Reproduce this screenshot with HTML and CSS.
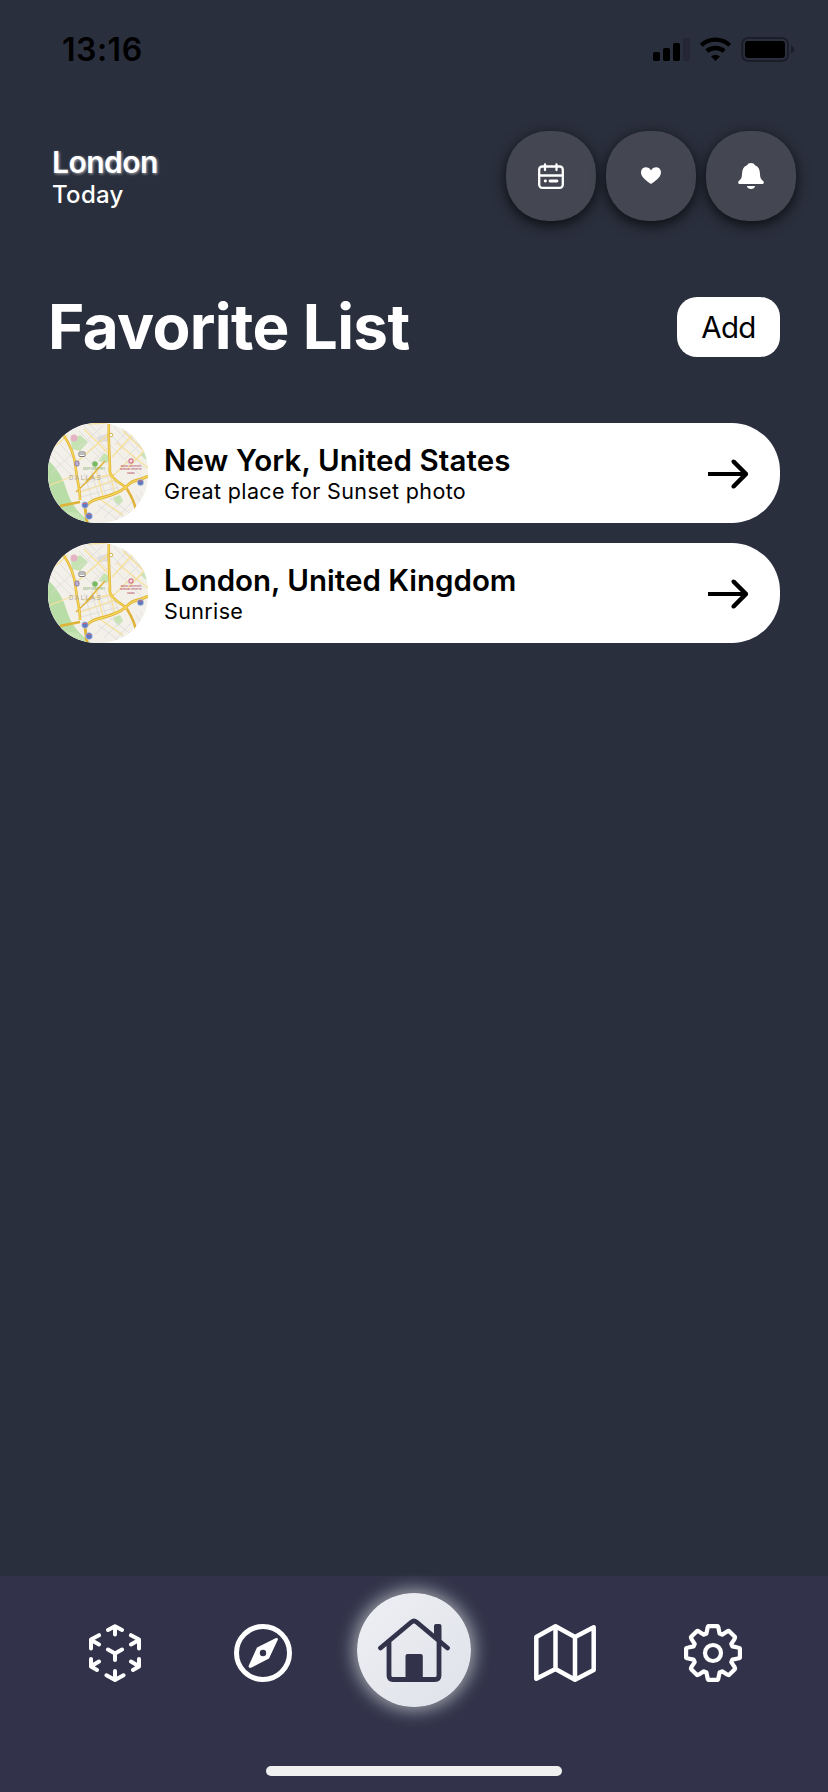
FILE: index.html
```
<!DOCTYPE html>
<html lang="en">
<head>
<meta charset="utf-8">
<title>Favorite List</title>
<link rel="stylesheet" href="styles.css">
</head>
<body>
<svg class="defs" aria-hidden="true">
  <symbol id="map-tile" viewBox="0 0 100 100">
    <rect width="100" height="100" fill="#f3f0ea"/>
    <path d="M0 37Q14 50 19 68T43 100H22L0 75Z" fill="#b9dda6"/>
    <path d="M23 17l9-5 8 7-8 9-8-2zM56 30l7 4-4 6-9-2zM92 32l8-6v12zM65 75l7-3 3 6-5 5zM18 88l12 2 10 10H24z" fill="#c6e3b3"/>
    <circle cx="26" cy="15" r="3.5" fill="#e5b3c4"/>
    <path d="M49 14l9-3 4 7-12 1z" fill="#dedcdc"/>
    <g fill="none" stroke="#dddbd9" stroke-width=".8">
      <path d="M31 8l24 24M36 3l25 25M41 1l18 18M34 31l16 16M42 25l17 17M66 4l30 30M70 1l30 30M64 13l33 33M62 22l34 34M31 24L55 3M36 33L60 12M43 40L62 23M66 22L84 3M71 28L94 5M77 36L99 14M82 43l18-18M30 62l36-10M31 68l39-10M33 74l38-10M36 50l9 29M43 48l9 28M50 47l8 26M57 47l8 23M64 51l6 16M50 82l20 15M55 78l22 17M62 75l22 17M47 91l20-18M56 95l18-18M67 97l17-18M2 31l22 22M5 26l22 22M11 20l15 16M3 50l23-21M88 72l11 15M92 68l8 12"/>
    </g>
    <g fill="none" stroke="#f6e09a" stroke-width="1.300">
      <path d="M30 38L56 15L62 9M36 6l26 26M64 34L86 10L98 2M69 20l31 25M75 8l24 23M79 46L98 26M35 57l33-6M33 69l36-13M47 43l9 34M60 45l7 25M2 62l26-10M50 75l25 17M62 0L40 1M0 29l20-17M68 50L80 38"/>
    </g>
    <g fill="none" stroke="#dfb238" stroke-linejoin="round">
      <path d="M14 10C23 22 27 33 28 47C29 58 32 64 32 77M12 83L32 79" stroke-width="2.6"/>
      <path d="M61 0C60 18 62 35 62 49C64 58 76 61 79 66S87 79 88 88" stroke-width="2.6"/>
      <path d="M37 84C43 76 51 76 60 73S74 68 80 62S91 58 100 53M37 84l2 16" stroke-width="3"/>
      <path d="M38 59L57 38M28 69L45 53" stroke-width="1.500"/>
    </g>
    <path d="M14 10C23 22 27 33 28 47C29 58 32 64 32 77M61 0C60 18 62 35 62 49C64 58 76 61 79 66M37 84C43 76 51 76 60 73S74 68 80 62S91 58 100 53" fill="none" stroke="#f6d85a" stroke-width="1.200"/>
    <circle cx="47" cy="41" r="2.8" fill="#78b964"/>
    <circle cx="83" cy="38" r="2.7" fill="#d4778b"/><path d="M83 36.500v3M81.500 38h3" stroke="#fff"/>
    <rect x="31" y="29" width="6" height="4.500" rx="1" fill="#fff" stroke="#777"/>
    <path d="M32 31h4" stroke="#777"/>
    <rect x="27" y="38" width="4" height="5" rx="1.500" fill="#b9adca" stroke="#8c7baa"/>
    <circle cx="63" cy="12" r="1.800" fill="#fff" stroke="#d5b44e"/>
    <g fill="#607ac1" stroke="#dce2ef" stroke-width=".6"><circle cx="37" cy="82" r="3.3"/><circle cx="41" cy="93" r="3.5"/><circle cx="92.500" cy="59.500" r="3.200"/></g>
    <path d="M35 80.500h4M39 91.500h4M90.500 58h4" stroke="#c86673"/>
  </symbol>
  <symbol id="arrow" viewBox="0 0 40 30">
    <path d="M0 15H37M25.500 2.500L38 15L25.500 27.500" fill="none" stroke="#000" stroke-width="4" stroke-linejoin="round"/>
    <path d="M25.500 2.500L38 15L25.500 27.500" fill="none" stroke="#000" stroke-width="4" stroke-linejoin="round" stroke-linecap="round"/>
  </symbol>
</svg>

<div class="screen">
  <div class="status">
    <span class="time">13:16</span>
    <svg class="signals" viewBox="0 0 142 26" width="142" height="26">
      <rect x="0" y="15" width="7" height="9" rx="1.700"/><rect x="10" y="11" width="7" height="13" rx="1.700"/><rect x="20" y="6" width="7" height="18" rx="1.700"/><rect x="30" y="1" width="7" height="23" rx="1.700" fill="#242635"/>
      <g fill="none" stroke="#000" stroke-width="4.300"><path d="M48.300 8.300Q54.300 2.700 62.500 2.700T76.700 8.300"/><path d="M53.800 14.200Q57.500 11 62.500 11T71.200 14.200"/></g>
      <path d="M58 19.500Q62.500 16 67 19.500L62.500 24Z"/>
      <rect x="89.200" y="1" width="45.800" height="23" rx="6" fill="none" stroke="#1b1e29" stroke-width="2"/>
      <rect x="92" y="4" width="40" height="17" rx="3"/><path d="M138 8.500q3 1 3 4t-3 4z" fill="#1b1e29"/>
    </svg>
  </div>

  <header class="header">
    <div class="place"><div class="city">London</div><div class="day">Today</div></div>
    <div class="actions">
      <button class="round" aria-label="Calendar"><svg viewBox="0 0 26 26" width="26" height="26" fill="none" stroke="#fff" stroke-width="2.300" stroke-linecap="round"><rect x="1.200" y="3.500" width="23.600" height="21.300" rx="3"/><path d="M1.500 12.500h23M7 1.500v5.500M18.500 1.500v5.500"/><path d="M7.200 18h.3M12 18h7" stroke-width="2.800"/></svg></button>
      <button class="round" aria-label="Favorites"><svg viewBox="0 0 26 26" width="26" height="26"><path d="M13 21C11.500 20 6 16.300 4 13C1.500 8.500 4 4.300 7.700 4.300Q11.300 4.300 13 7.500Q14.700 4.300 18.300 4.300C22 4.300 24.500 8.500 22 13C20 16.300 14.500 20 13 21Z" fill="#fff"/></svg></button>
      <button class="round" aria-label="Notifications"><svg viewBox="0 0 26 26" width="26" height="26" fill="#fff"><path d="M13 0Q16 0 17 2.300C20.500 3.800 21.700 6.500 21.900 10C22.100 14.500 22.700 16 25 17.800Q26.600 19.500 25 21H1Q-.6 19.500 1 17.800C3.300 16 3.900 14.500 4.100 10C4.300 6.500 5.500 3.800 9 2.300Q10 0 13 0Z"/><path d="M8.800 23h8.400Q16.300 26 13 26T8.800 23Z"/></svg></button>
    </div>
  </header>

  <main class="content">
    <div class="heading"><h1 class="title">Favorite List</h1><button class="add">Add</button></div>
    <div class="list">
      <article class="card">
        <svg class="thumb" viewBox="0 0 100 100" width="100" height="100"><use href="#map-tile"/>
          <text class="map-city" x="21" y="57">DALLAS</text><text class="map-park" x="35" y="47.300">DEEP DEEP PKY</text>
          <text class="map-poi" x="83" y="44.300">Baylor University</text><text class="map-poi" x="83" y="47.400">Medical Center at</text><text class="map-poi" x="83" y="50.500">Dallas</text>
        </svg>
        <div class="info"><div class="name name-wide">New York, United States</div><div class="note">Great place for Sunset photo</div></div>
        <svg class="go" width="40" height="30"><use href="#arrow"/></svg>
      </article>
      <article class="card">
        <svg class="thumb" viewBox="0 0 100 100" width="100" height="100"><use href="#map-tile"/>
          <text class="map-city" x="21" y="57">DALLAS</text><text class="map-park" x="35" y="47.300">DEEP DEEP PKY</text>
          <text class="map-poi" x="83" y="44.300">Baylor University</text><text class="map-poi" x="83" y="47.400">Medical Center at</text><text class="map-poi" x="83" y="50.500">Dallas</text>
        </svg>
        <div class="info"><div class="name">London, United Kingdom</div><div class="note">Sunrise</div></div>
        <svg class="go" width="40" height="30"><use href="#arrow"/></svg>
      </article>
    </div>
  </main>

  <nav class="tabs">
    <div class="tab-row">
      <svg viewBox="0 0 52 58" width="52" height="58" fill="none" stroke="#fff" stroke-width="4" stroke-linecap="round" stroke-linejoin="round"><path d="M26 10.500V2.500M19 6L26 2.200L33 6M26 47v9M17.500 51.300L26 56L34.500 51.300M26 36v-6.500L19 25.500M26 29.500L33 25.500M10 11.200L2 15.500V24.500M3 16.500L10 20.500M42 11.200L50 15.500V24.500M49 16.500L42 20.500M2 35v7.500L8 46M2.500 42L10 37.500M50 35v7.500L44 46M49.500 42L42 37.500"/></svg>
      <svg viewBox="0 0 58 58" width="58" height="58"><circle cx="29" cy="29" r="26.500" fill="none" stroke="#fff" stroke-width="5"/><path fill="#fff" fill-rule="evenodd" d="M23 23.500L42 14Q44.500 13.500 43.700 16L35 34.500L17 43.700Q14 44.500 14.800 41.500ZM29 25.800a3.200 3.200 0 1 0 0 6.400a3.200 3.200 0 1 0 0-6.400Z"/></svg>
      <div class="home"><svg viewBox="0 0 72 64" width="72" height="64"><path d="M2.500 30L33.500 4Q36 2 38.500 4L69.500 30M11 24v33.500q0 4 4 4h42q4 0 4-4V24" fill="none" stroke="#32334a" stroke-width="4.800" stroke-linecap="round" stroke-linejoin="round"/><path d="M56 18V8q0-2 2-2h3.500q2 0 2 2v18zM27.500 61V38q0-2 2-2h13.300q2 0 2 2V61z" fill="#32334a"/></svg></div>
      <svg viewBox="0 0 62 58" width="62" height="58" fill="none" stroke="#fff" stroke-width="4.500" stroke-linejoin="round"><path d="M2.300 13L21.500 2.300L41 13L59.700 3.300V46L41 55.700L21.500 45L2.300 54.700ZM21.500 3V45M41 13V55"/></svg>
      <svg viewBox="0 0 58 58" width="58" height="58" fill="none" stroke="#fff" stroke-width="4.200" stroke-linejoin="round"><path d="M24.600 2.100h8.800q.8 0 1.100 2.200l1.100 5.300l2.500 1.100l4.600-3q1.800-1.200 2.500-.5l5.600 5.600q.7.700-.5 2.500l-3 4.600l1.100 2.500l5.300 1.100q2.200.3 2.200 1.100v8.800q0 .8-2.200 1.100l-5.300 1.100l-1.100 2.500l3 4.600q1.200 1.800.5 2.500l-5.600 5.600q-.7.700-2.500-.5l-4.600-3l-2.500 1.100l-1.100 5.300q-.3 2.200-1.100 2.200h-8.800q-.8 0-1.100-2.200l-1.100-5.300l-2.500-1.100l-4.600 3q-1.800 1.200-2.500.5l-5.600-5.600q-.7-.7.500-2.500l3-4.600l-1.100-2.500l-5.300-1.100q-2.200-.3-2.200-1.100v-8.800q0-.8 2.200-1.100l5.300-1.100l1.100-2.500l-3-4.600q-1.200-1.800-.5-2.500l5.600-5.600q.7-.7 2.500.5l4.600 3l2.500-1.100l1.100-5.300q.3-2.200 1.100-2.200Z"/><circle cx="29" cy="29" r="8"/></svg>
    </div>
    <div class="indicator"></div>
  </nav>
</div>
</body>
</html>
```

FILE: styles.css
```
* { box-sizing: border-box; }
body { margin: 0; background: #2a2f3d; font-family: Inter, "Liberation Sans", sans-serif; color: #fff; }
button { border: 0; padding: 0; font: inherit; }
svg { display: block; flex: none; }
.defs { position: absolute; width: 0; height: 0; }
.screen { width: 828px; height: 1792px; display: flex; flex-direction: column; background: #2a2f3d; overflow: hidden; }
.status { height: 131px; padding: 30px 33px 0 62px; display: flex; justify-content: space-between; align-items: flex-start; color: #000; }
.time { font-size: 32px; font-weight: 600; line-height: 40px; letter-spacing: .5px; }
.signals { margin-top: 7px; }
.header { height: 90px; padding: 0 32px 0 52px; display: flex; justify-content: space-between; }
.place { padding-top: 14px; }
.city { font-size: 30px; font-weight: 600; line-height: 34px; letter-spacing: -.5px; text-shadow: 1px 1px 3px rgba(255,255,255,.6); }
.day { font-size: 24px; font-weight: 500; line-height: 32px; letter-spacing: .3px; }
.actions { display: flex; gap: 10px; }
.round { width: 90px; height: 90px; border-radius: 42px; background: #444751; display: flex; align-items: center; justify-content: center; box-shadow: 0 4px 14px rgba(0,0,0,.75); }
.content { flex: 1; padding: 76px 48px 0; }
.heading { height: 60px; display: flex; align-items: center; justify-content: space-between; }
.title { margin: 0; font-size: 62px; font-weight: 700; line-height: 60px; letter-spacing: -.65px; white-space: nowrap; }
.add { width: 103px; height: 60px; border-radius: 20px; background: #fff; color: #000; font-size: 29.500px; line-height: 60px; letter-spacing: -.7px; }
.list { padding-top: 66px; display: flex; flex-direction: column; gap: 20px; }
.card { height: 100px; padding-right: 32px; border-radius: 48px; background: #fff; color: #000; display: flex; align-items: center; overflow: hidden; }
.thumb { border-radius: 48px; font-family: Inter, sans-serif; }
.map-city { font-size: 6.300px; letter-spacing: 1.500px; fill: #aaa5a0; }
.map-park { font-size: 2.900px; fill: #69a657; }
.map-poi { font-size: 2.500px; font-weight: 600; text-anchor: middle; fill: #b75e73; }
.info { flex: 1; padding: 2px 0 0 16px; white-space: nowrap; }
.name { font-size: 29.500px; font-weight: 600; line-height: 34px; }
.name-wide { letter-spacing: .1px; }
.note { font-size: 21.500px; line-height: 28px; letter-spacing: .36px; }
.go { margin-top: 2px; }
.tabs { height: 216px; background: #32334a; display: flex; flex-direction: column; align-items: center; }
.tab-row { height: 154px; display: grid; grid-template-columns: 148px 148px 154px 148px 148px; place-items: center; }
.home { width: 114px; height: 114px; margin-top: -6px; border-radius: 50%; background: linear-gradient(135deg, #eeeff4, #dfe2e9); display: flex; justify-content: center; align-items: center; box-shadow: 0 0 18px 2px rgba(235,240,240,.7), 0 0 2px rgba(0,0,0,.5); }
.indicator { width: 296px; height: 10px; margin-top: 36px; border-radius: 5px; background: #f0f0f0; }
```
